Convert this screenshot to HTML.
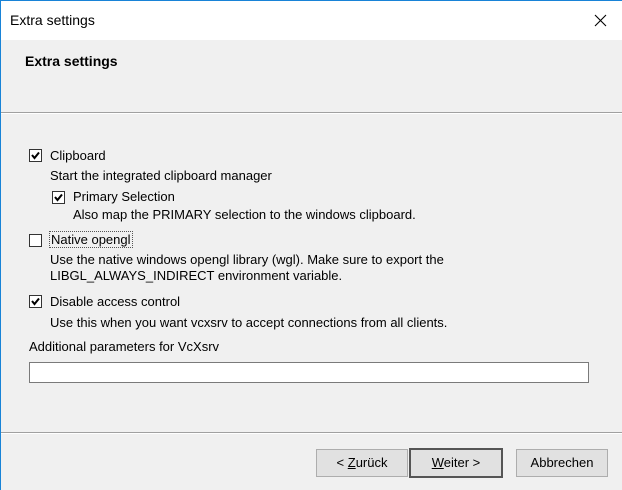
<!DOCTYPE html><html><head><style>
body{margin:0;width:622px;height:490px;overflow:hidden;background:#f0f0f0;font-family:"Liberation Sans",sans-serif;font-size:13px;color:#000;position:relative}
.a{position:absolute;white-space:nowrap}
.cb{position:absolute;width:11px;height:11px;border:1px solid #333;background:#fff}
.cb svg{position:absolute;left:1px;top:1px}
.btn{position:absolute;top:449px;width:90px;height:26px;border:1px solid #adadad;background:#e1e1e1;text-align:center;line-height:26px;box-sizing:content-box}
</style></head><body>
<div class="a" style="left:0;top:0;width:622px;height:40px;background:#fff;border-top:1px solid #1883d7;border-left:1px solid #1883d7;box-sizing:border-box"></div>
<div class="a" style="left:10px;top:12px;font-size:14px">Extra settings</div>
<svg class="a" style="left:594px;top:14px" width="13" height="13"><path d="M1 1L12 12M12 1L1 12" stroke="#000" stroke-width="1.1"/></svg>
<div class="a" style="left:0;top:40px;width:1px;height:450px;background:#1883d7"></div>
<div class="a" style="left:25px;top:53px;font-weight:bold;font-size:14px">Extra settings</div>
<div class="a" style="left:1px;top:112px;width:621px;height:1px;background:#a0a0a0"></div>
<div class="a" style="left:1px;top:113px;width:621px;height:1px;background:#fff"></div>

<div class="cb" style="left:29px;top:149px"><svg width="9" height="9"><path d="M1 4L3.5 7L8 1.5" stroke="#000" stroke-width="2" fill="none"/></svg></div>
<div class="a" style="left:50px;top:148px">Clipboard</div>
<div class="a" style="left:50px;top:168px">Start the integrated clipboard manager</div>
<div class="cb" style="left:52px;top:191px"><svg width="9" height="9"><path d="M1 4L3.5 7L8 1.5" stroke="#000" stroke-width="2" fill="none"/></svg></div>
<div class="a" style="left:73px;top:189px">Primary Selection</div>
<div class="a" style="left:73px;top:207px">Also map the PRIMARY selection to the windows clipboard.</div>
<div class="cb" style="left:29px;top:234px"></div>
<div class="a" style="left:50px;top:232px;outline:1px dotted #555;padding:0 1px">Native opengl</div>
<div class="a" style="left:50px;top:252px">Use the native windows opengl library (wgl). Make sure to export the</div>
<div class="a" style="left:50px;top:268px">LIBGL_ALWAYS_INDIRECT environment variable.</div>
<div class="cb" style="left:29px;top:295px"><svg width="9" height="9"><path d="M1 4L3.5 7L8 1.5" stroke="#000" stroke-width="2" fill="none"/></svg></div>
<div class="a" style="left:50px;top:294px">Disable access control</div>
<div class="a" style="left:50px;top:315px">Use this when you want vcxsrv to accept connections from all clients.</div>
<div class="a" style="left:29px;top:339px">Additional parameters for VcXsrv</div>
<div class="a" style="left:29px;top:362px;width:558px;height:19px;border:1px solid #7a7a7a;background:#fff"></div>

<div class="a" style="left:1px;top:432px;width:621px;height:1px;background:#a0a0a0"></div>
<div class="a" style="left:1px;top:433px;width:621px;height:1px;background:#fff"></div>
<div class="btn" style="left:316px">&lt; <u>Z</u>urück</div>
<div class="btn" style="left:409px;border:2px solid #555;top:448px;width:90px"><u>W</u>eiter &gt;</div>
<div class="btn" style="left:516px">Abbrechen</div>
</body></html>
